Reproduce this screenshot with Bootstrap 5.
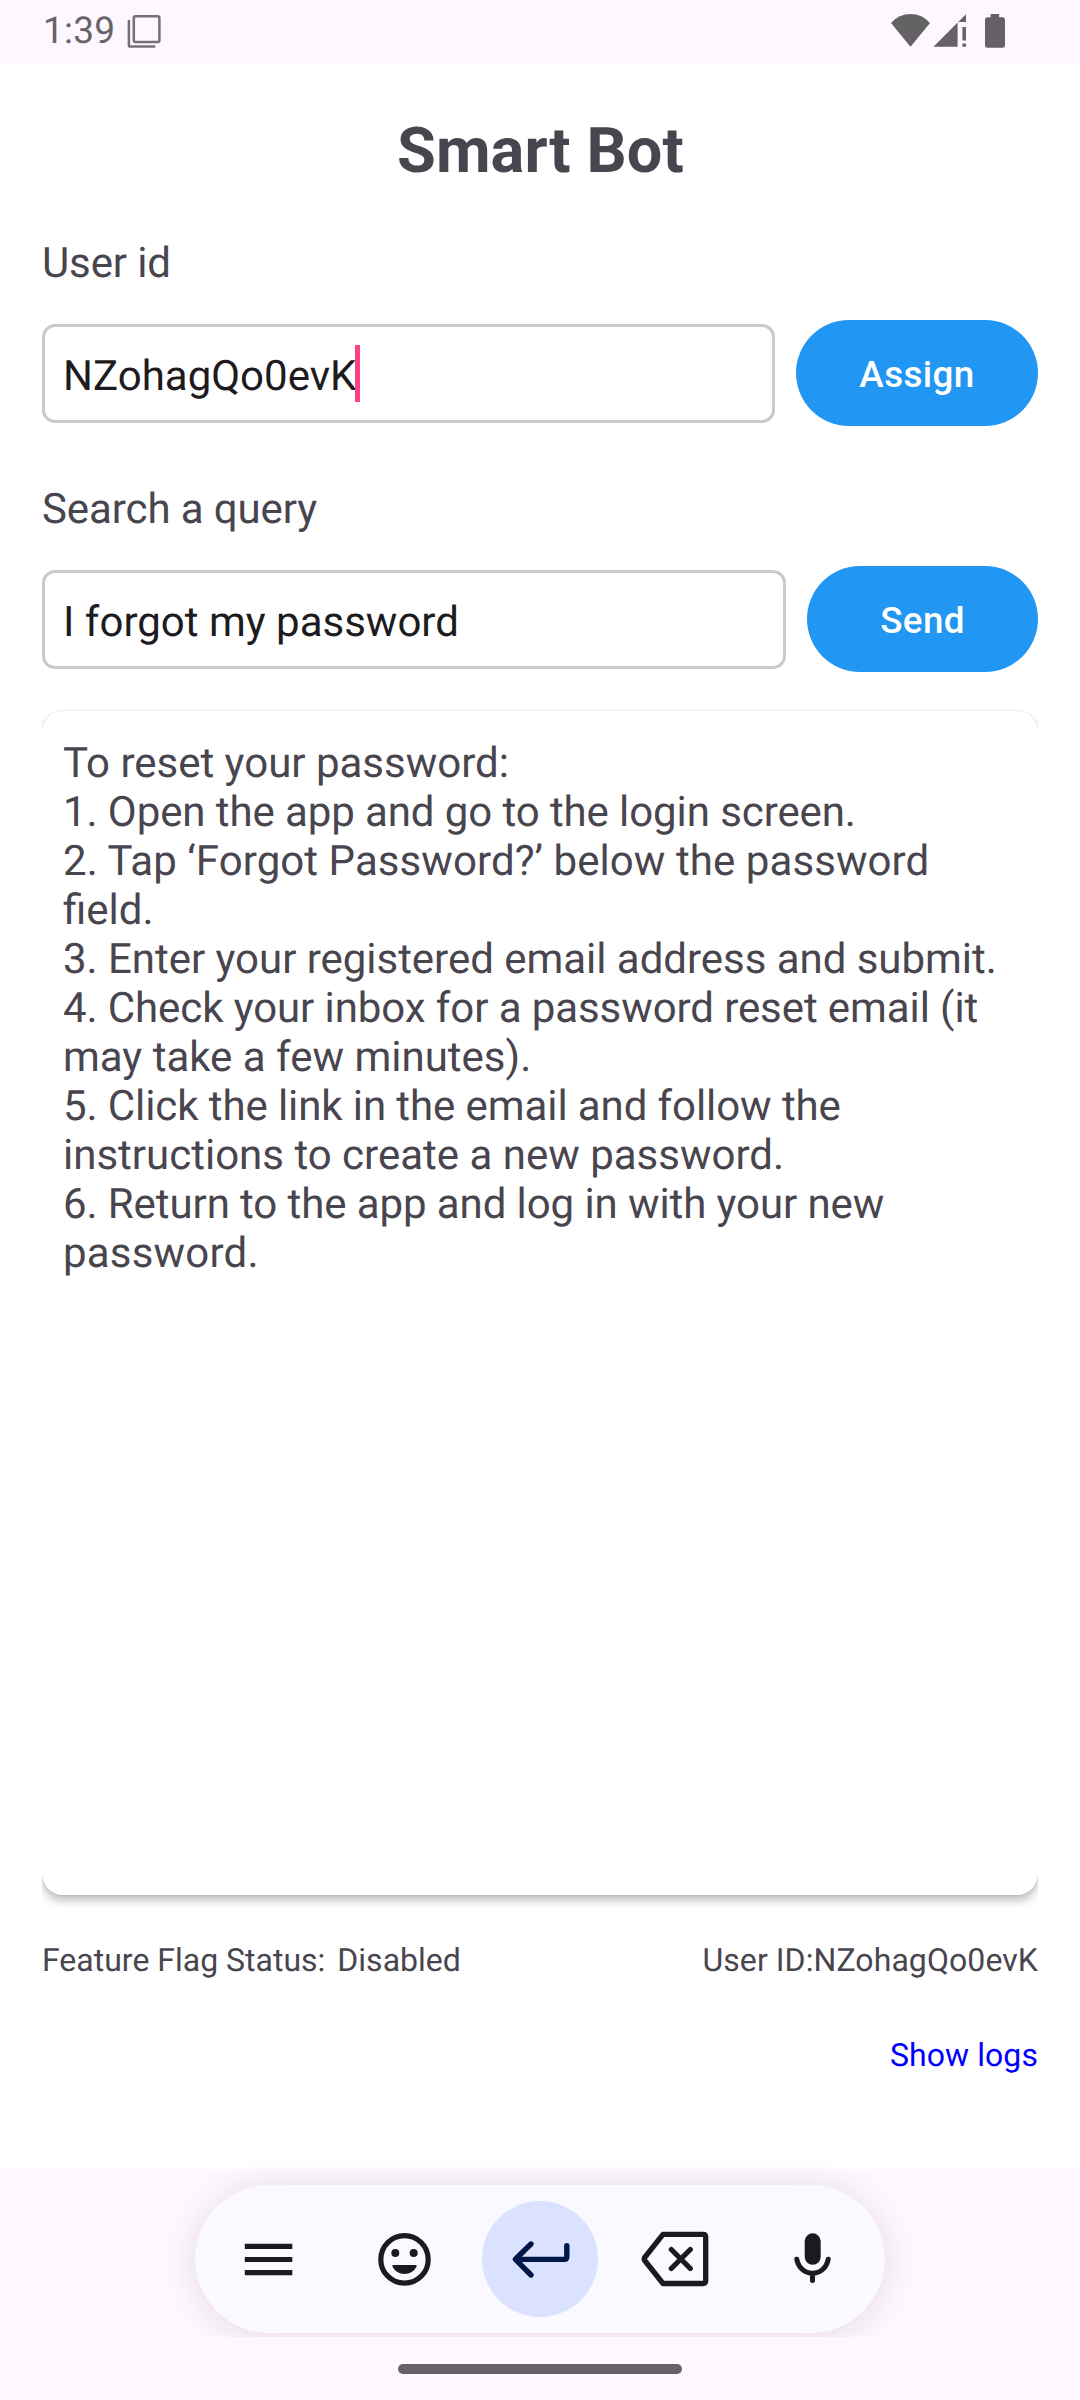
<!DOCTYPE html>
<html lang="en">
<head>
<meta charset="utf-8">
<meta name="viewport" content="width=device-width, initial-scale=1">
<title>Smart Bot</title>
<link href="https://cdn.jsdelivr.net/npm/bootstrap@5.3.0/dist/css/bootstrap.min.css" rel="stylesheet">
<style>
  body { font-family: Roboto, sans-serif; color: #49454f; background: #fff; font-size: 42px; line-height: 49px; text-rendering: geometricPrecision; }
  svg { display: block; flex: none; }
  .screen { width: 1080px; height: 2400px; overflow: hidden; }
  .statusbar { height: 63px; background: #fef7ff; color: #676468; padding: 0 72px 0 43px; }
  .clock { font-size: 37px; line-height: 62px; width: 83px; padding-top: 1px; letter-spacing: .2px; }
  .app-main { height: 2106px; padding: 0 42px; }
  .app-title { font-size: 63px; line-height: 74px; font-weight: 700; letter-spacing: .15px; margin: 52px 0 0; padding-left: 1px; }
  .field-label { margin-top: 50px; letter-spacing: -.12px; }
  .field-row { gap: 21px; margin-top: 32px; height: 106px; }
  .query-label { margin-top: 59px; letter-spacing: -.1px; }
  .entry { height: 99px; border: 3px solid #cacaca; border-radius: 13px; padding: 0 18px; color: #1d1b20; background: #fff; font-size: 42px; line-height: 49px; }
  .entry-text { padding-top: 6px; }
  .caret { width: 5px; height: 57px; background: #ff4081; margin-left: -1px; }
  .btn-bot { --bs-btn-color: #fff; --bs-btn-bg: #2196f3; --bs-btn-hover-bg: #1e88e5; --bs-btn-hover-color: #fff; height: 106px; width: 242px; border: 0; border-radius: 53px; font-size: 36.75px; font-weight: 500; letter-spacing: .4px; padding: 3px 0 0; flex: none; }
  .btn-send { width: 231px; }
  .reply { height: 1184px; margin-top: 39px; padding: 28px 21px; border: 0; border-radius: 21px; color: #49454f; box-shadow: 0 6px 9px rgba(0,0,0,.24), 0 0 3px rgba(0,0,0,.12); clip-path: inset(-12px 0 -24px 0); }
  .tight { letter-spacing: -.09px; }
  .snug { letter-spacing: -.03px; }
  .loose { letter-spacing: .07px; }
  .looser { letter-spacing: .2px; }
  .meta { font-size: 32px; line-height: 37px; }
  .meta-row { margin-top: 47px; }
  .meta-id { letter-spacing: .08px; }
  .logs { margin-top: 58px; color: #00f; letter-spacing: .08px; }
  .ime { height: 231px; background: #fef7ff; padding-top: 16px; }
  .ime-clip { width: 690px; height: 152px; clip-path: inset(-60px -60px 0 -60px); }
  .ime-bar { height: 148px; border-radius: 74px; background: #f9f9ff; box-shadow: 0 3px 34px rgba(50,20,45,.12); }
  .handle { width: 284px; height: 10px; border-radius: 5px; background: #656266; margin-top: 27px; }
</style>
</head>
<body>
<div class="screen d-flex flex-column">
  <header class="statusbar d-flex align-items-center">
    <span class="clock">1:39</span>
    <svg width="36" height="63" viewBox="126 0 36 63" fill="none" stroke="#747075" stroke-width="2.5" stroke-linejoin="round"><rect x="133.8" y="16.3" width="25.6" height="25.6" rx="1.6"/><path d="M128.9 20v25.2q0 1.4 1.4 1.4H155.300"/></svg>
    <svg class="ms-auto" width="120" height="63" viewBox="888 0 120 63" fill="#656266"><path d="M891 22.900Q899 14 910.500 14T930 22.900L910.500 46.800z"/><path d="M933.500 46.800L957.600 22.600V46.800zM958.300 21.900L966 14.200v7.700zM962.400 27h3.600v13.500h-3.600zM962.400 43.600h3.600v3.200h-3.600z"/><path d="M990.600 14h8.500v3.300h3.500q2.400 0 2.400 2.400v25.800q0 2.300-2.400 2.300h-15.200q-2.400 0-2.400-2.300V19.700q0-2.400 2.400-2.400h3.200z"/></svg>
  </header>

  <main class="app-main">
    <h1 class="app-title text-center">Smart Bot</h1>
    <div class="field-label">User id</div>
    <div class="field-row d-flex align-items-center">
      <div class="entry flex-grow-1 d-flex align-items-center"><span class="entry-text">NZohagQo0evK</span><span class="caret"></span></div>
      <button class="btn btn-bot">Assign</button>
    </div>
    <div class="query-label">Search a query</div>
    <div class="field-row d-flex align-items-center">
      <div class="entry flex-grow-1 d-flex align-items-center"><span class="entry-text">I forgot my password</span></div>
      <button class="btn btn-bot btn-send">Send</button>
    </div>
    <section class="card reply">
      <div>To reset your password:</div>
      <div class="tight">1. Open the app and go to the login screen.</div>
      <div><span class="loose">2. Tap ‘Forgot Password?’ below the password</span><br>field.</div>
      <div class="snug">3. Enter your registered email address and submit.</div>
      <div><span class="tight">4. Check your inbox for a password reset email (it</span><br>may take a few minutes).</div>
      <div><span class="tight">5. Click the link in the email and follow the</span><br>instructions to create a new password.</div>
      <div><span class="tight">6. Return to the app and log in with your new</span><br><span class="looser">password.</span></div>
    </section>
    <div class="meta meta-row d-flex justify-content-between">
      <div class="d-flex"><span class="me-2 pe-1">Feature Flag Status:</span><span>Disabled</span></div>
      <div class="meta-id">User ID:NZohagQo0evK</div>
    </div>
    <div class="meta logs text-end">Show logs</div>
  </main>

  <footer class="ime d-flex flex-column align-items-center">
    <div class="ime-clip">
      <div class="ime-bar d-flex justify-content-center">
        <svg width="136" height="148" viewBox="200 2185 136 148" stroke="#1a1b20" stroke-width="5.200"><path d="M244.800 2246.300h47.500M244.800 2259.500h47.500M244.800 2272.600h47.500"/></svg>
        <svg width="136" height="148" viewBox="336 2185 136 148" fill="#1a1b20"><circle cx="404.500" cy="2259.400" r="23.700" fill="none" stroke="#1a1b20" stroke-width="5.200"/><circle cx="395.300" cy="2253" r="4"/><circle cx="413.700" cy="2253" r="4"/><path d="M393.500 2265h22q1.800 0 1.100 1.600-3.900 7.500-12.100 7.500t-12.100-7.500q-.7-1.600 1.100-1.600z"/></svg>
        <svg width="136" height="148" viewBox="472 2185 136 148" fill="none" stroke="#001849" stroke-width="5.400" stroke-linecap="round" stroke-linejoin="round"><circle cx="540" cy="2259" r="58" fill="#dae2ff" stroke="none"/><path d="M531 2244l-15.600 15.300L531 2275M516 2259.400h48.500q2.300 0 2.300-2.300v-11.500"/></svg>
        <svg width="136" height="148" viewBox="608 2185 136 148" fill="none" stroke="#1a1b20" stroke-width="5.300" stroke-linecap="round" stroke-linejoin="round"><path d="M663 2234.400h40q2.700 0 2.700 2.700v43.700q0 2.700-2.700 2.700h-40l-18.300-23q-1-1.500 0-3zM671.300 2249.500l19 19M690.300 2249.500l-19 19"/></svg>
        <svg width="136" height="148" viewBox="744 2185 136 148" fill="none" stroke="#1a1b20" stroke-width="5" stroke-linecap="round"><rect x="804.700" y="2233.300" width="16" height="31.500" rx="8" fill="#1a1b20" stroke="none"/><path d="M796.800 2259.300c1.500 8.500 8 14 15.700 14s14.200-5.500 15.700-14M812.500 2274v6.400"/></svg>
      </div>
    </div>
    <div class="handle"></div>
  </footer>
</div>
<script src="https://cdn.jsdelivr.net/npm/bootstrap@5.3.0/dist/js/bootstrap.bundle.min.js"></script>
</body>
</html>
